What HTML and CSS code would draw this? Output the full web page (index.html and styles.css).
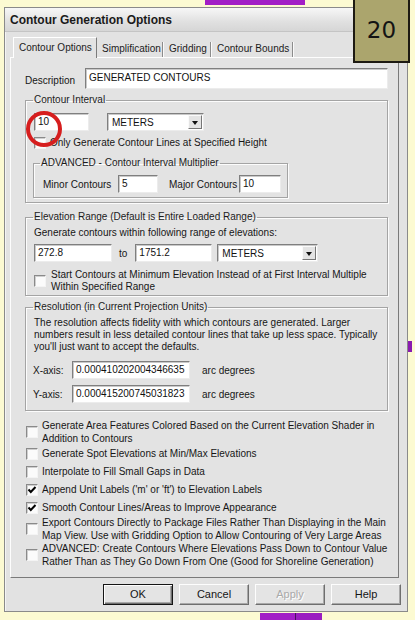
FILE: index.html
```html
<!DOCTYPE html>
<html>
<head>
<meta charset="utf-8">
<title>Contour Generation Options</title>
<link rel="stylesheet" href="styles.css">
</head>
<body>
<div class="deco deco-top"></div>
<div class="deco deco-bottom"></div>
<div class="deco deco-right"></div>

<div class="window">
  <div class="titlebar">Contour Generation Options</div>

  <div class="tabs">
    <div class="tab active w-opt">Contour Options</div>
    <div class="tab w-simp">Simplification</div>
    <div class="tab w-grid">Gridding</div>
    <div class="tab w-bounds">Contour Bounds</div>
  </div>

  <div class="panel">
    <div class="row desc-row">
      <span class="lbl-desc">Description</span>
      <div class="input grow">GENERATED CONTOURS</div>
    </div>

    <fieldset class="group g-interval">
      <legend>Contour Interval</legend>
      <div class="row h18">
        <div class="input in-interval">10</div>
        <div class="combo c-interval"><span class="combo-text">METERS</span><span class="drop"><i></i></span></div>
      </div>
      <div class="check c-only">
        <span class="box"></span>
        <span class="check-text">Only Generate Contour Lines at Specified Height</span>
      </div>
      <fieldset class="group g-adv">
        <legend>ADVANCED - Contour Interval Multiplier</legend>
        <div class="row h18">
          <span class="lbl-minor">Minor Contours</span>
          <div class="input in-minor">5</div>
          <span class="lbl-major">Major Contours</span>
          <div class="input in-major">10</div>
        </div>
      </fieldset>
    </fieldset>

    <fieldset class="group g-elev">
      <legend>Elevation Range (Default is Entire Loaded Range)</legend>
      <div class="line">Generate contours within following range of elevations:</div>
      <div class="row h18 r-range">
        <div class="input in-min">272.8</div>
        <span class="lbl-to">to</span>
        <div class="input in-max">1751.2</div>
        <div class="combo c-elev"><span class="combo-text">METERS</span><span class="drop"><i></i></span></div>
      </div>
      <div class="check c-start">
        <span class="box"></span>
        <span class="check-text lh12">Start Contours at Minimum Elevation Instead of at First Interval Multiple<br>Within Specified Range</span>
      </div>
    </fieldset>

    <fieldset class="group g-res">
      <legend>Resolution (in Current Projection Units)</legend>
      <div class="para">The resolution affects fidelity with which contours are generated. Larger<br>numbers result in less detailed contour lines that take up less space. Typically<br>you'll just want to accept the defaults.</div>
      <div class="row h18 r-x">
        <span class="lbl-axis">X-axis:</span>
        <div class="input in-axis">0.000410202004346635</div>
        <span class="lbl-unit">arc degrees</span>
      </div>
      <div class="row h18 r-y">
        <span class="lbl-axis">Y-axis:</span>
        <div class="input in-axis">0.000415200745031823</div>
        <span class="lbl-unit">arc degrees</span>
      </div>
    </fieldset>

    <div class="options">
      <div class="check opt multi">
        <span class="box"></span>
        <span class="check-text">Generate Area Features Colored Based on the Current Elevation Shader in<br>Addition to Contours</span>
      </div>
      <div class="check opt single">
        <span class="box"></span>
        <span class="check-text">Generate Spot Elevations at Min/Max Elevations</span>
      </div>
      <div class="check opt single">
        <span class="box"></span>
        <span class="check-text">Interpolate to Fill Small Gaps in Data</span>
      </div>
      <div class="check opt single">
        <span class="box checked"><svg viewBox="0 0 10 10" width="10" height="10"><polyline points="1.5,4.5 3.8,7 8.5,2" fill="none" stroke="#000" stroke-width="2"/></svg></span>
        <span class="check-text">Append Unit Labels ('m' or 'ft') to Elevation Labels</span>
      </div>
      <div class="check opt single">
        <span class="box checked"><svg viewBox="0 0 10 10" width="10" height="10"><polyline points="1.5,4.5 3.8,7 8.5,2" fill="none" stroke="#000" stroke-width="2"/></svg></span>
        <span class="check-text">Smooth Contour Lines/Areas to Improve Appearance</span>
      </div>
      <div class="check opt multi">
        <span class="box"></span>
        <span class="check-text">Export Contours Directly to Package Files Rather Than Displaying in the Main<br>Map View. Use with Gridding Option to Allow Contouring of Very Large Areas</span>
      </div>
      <div class="check opt multi">
        <span class="box"></span>
        <span class="check-text">ADVANCED: Create Contours Where Elevations Pass Down to Contour Value<br>Rather Than as They Go Down From One (Good for Shoreline Generation)</span>
      </div>
    </div>
  </div>

  <div class="buttons">
    <div class="btn default">OK</div>
    <div class="btn">Cancel</div>
    <div class="btn disabled">Apply</div>
    <div class="btn">Help</div>
  </div>
</div>

<svg class="mark" width="40" height="40" viewBox="0 0 40 40"><circle cx="20" cy="20" r="16" fill="none" stroke="#d61e1e" stroke-width="4"/></svg>
<div class="badge">20</div>
</body>
</html>
```

FILE: styles.css
```css
* { box-sizing: border-box; }

body {
  margin: 0;
  width: 415px;
  height: 620px;
  overflow: hidden;
  position: relative;
  background: #fcfad2;
  font-family: "Liberation Sans", Arial, sans-serif;
  font-size: 10px;
  color: #161616;
}

/* background decorations from the surrounding canvas */
.deco { position: absolute; background: #a21fc6; }
.deco-top { left: 205px; top: 0; width: 100px; height: 5px; }
.deco-bottom { left: 260px; top: 613px; width: 62px; height: 7px;
  background: linear-gradient(90deg, #a21fc6 0 35px, #4a1060 35px 36px, #9a1dc0 36px); }
.deco-right { left: 408px; top: 341px; width: 4px; height: 11px; background: #8a1ab0; }

.window {
  margin: 7px 0 0 4px;
  width: 404px;
  height: 605px;
  border: 1px solid #8a8a8a;
  box-shadow: inset 1px 1px 0 #f4f4f4;
  background: #e2e2e2;
  display: flex;
  flex-direction: column;
}

.titlebar {
  height: 24px;
  line-height: 24px;
  padding-left: 5px;
  font-size: 12px;
  font-weight: bold;
  color: #1a1a1a;
  background: linear-gradient(#f7f7f7, #e0e0e0 60%, #d6d6d6);
  border-bottom: 1px solid #c4c4c4;
  flex: none;
}

.tabs {
  display: flex;
  align-items: flex-end;
  margin: 5px 0 0 8px;
  height: 20px;
  flex: none;
}
.tab {
  height: 15px;
  line-height: 14px;
  padding-left: 5px;
  white-space: nowrap;
  border-right: 1px solid #8c8c8c;
  box-shadow: 1px 0 0 #fafafa;
  color: #1c1c1c;
}
.tab.active {
  height: 21px;
  line-height: 20px;
  padding-left: 5px;
  background: #e3e3e3;
  border-top: 1px solid #fff;
  border-left: 1px solid #fff;
  border-right: 1px solid #7c7c7c;
  box-shadow: none;
  margin-bottom: -1px;
  position: relative;
  z-index: 1;
}
.w-opt { width: 84px; }
.w-simp { width: 66px; }
.w-grid { width: 48px; padding-left: 6px; }
.w-bounds { width: 82px; padding-left: 6px; }

.panel {
  margin-left: 5px;
  width: 389px;
  height: 521px;
  flex: none;
  background: #e3e3e3;
  border: 1px solid;
  border-color: #fdfdfd #7a7a7a #7a7a7a #fdfdfd;
  padding: 10px 10px 8px 14px;
}

.row { display: flex; align-items: center; }
.h18 { height: 18px; }

.desc-row { height: 21px; }
.lbl-desc { width: 60px; padding-top: 3px; }
.grow { flex: 1; }

.input {
  height: 100%;
  background: #fff;
  border: 1px solid;
  border-color: #7f7f7f #ececec #ececec #7f7f7f;
  box-shadow: inset 1px 1px 0 #c9c9c9;
  padding: 2px 0 0 3px;
  line-height: 12px;
  white-space: nowrap;
  overflow: hidden;
  color: #111;
}
.desc-row .input { padding-top: 3px; }

.combo {
  height: 100%;
  display: flex;
  align-items: center;
  background: #fff;
  border: 1px solid;
  border-color: #7f7f7f #ececec #ececec #7f7f7f;
  box-shadow: inset 1px 1px 0 #c9c9c9;
  padding: 1px 1px 1px 4px;
}
.combo-text { flex: 1; color: #111; }
.drop {
  width: 14px;
  height: 14px;
  display: flex;
  align-items: center;
  justify-content: center;
  background: #e4e4e4;
  border: 1px solid;
  border-color: #fafafa #777 #777 #fafafa;
}
.drop i {
  width: 0;
  height: 0;
  border-left: 3.5px solid transparent;
  border-right: 3.5px solid transparent;
  border-top: 4px solid #111;
  margin-top: 1px;
}

.group {
  margin: 0;
  min-width: 0;
  border: 1px solid #a4a4a4;
  box-shadow: inset 1px 1px 0 #fcfcfc, 1px 1px 0 #fcfcfc;
  padding: 7px 4px 4px 7px;
}
.group legend {
  padding: 0 1px;
  line-height: 12px;
  color: #1c1c1c;
}

.g-interval { margin-top: 5px; }
.in-interval { width: 55px; margin-left: 1px; }
.c-interval { width: 97px; margin-left: 18px; }

.check { display: flex; align-items: center; }
.box {
  width: 12px;
  height: 12px;
  flex: none;
  background: #fbfbfb;
  border: 1px solid;
  border-color: #8a8a8a #f4f4f4 #f4f4f4 #8a8a8a;
  box-shadow: inset 1px 1px 0 #cfcfcf;
  display: flex;
  align-items: center;
  justify-content: center;
}
.check-text { white-space: nowrap; }

.c-only { margin: 6px 0 0 1px; height: 12px; line-height: 12px; }
.c-only .check-text { margin-left: 4px; }

.g-adv { margin-top: 8px; width: 255px; padding: 6px 4px 4px 6px; }
.lbl-minor { width: 75px; margin-left: 3px; }
.in-minor { width: 40px; }
.lbl-major { width: 70px; margin-left: 11px; }
.in-major { width: 42px; }

.g-elev { margin-top: 8px; padding: 4px 4px 2px 7px; }
.line { line-height: 12px; margin-left: 1px; }
.r-range { margin-top: 5px; }
.in-min { width: 78px; margin-left: 1px; }
.lbl-to { margin: 0 8px 0 7px; }
.in-max { width: 77px; }
.c-elev { width: 101px; margin-left: 5px; }
.c-start { margin: 7px 0 0 1px; }
.c-start .check-text { margin-left: 5px; }
.lh12 { line-height: 12px; }

.g-res { margin-top: 5px; padding: 4px 4px 7px 7px; }
.para { line-height: 12px; margin-left: 1px; white-space: nowrap; }
.r-x { margin-top: 8px; }
.r-y { margin-top: 6px; }
.lbl-axis { width: 39px; }
.in-axis { width: 118px; }
.lbl-unit { margin-left: 12px; }

.options { margin-top: 8px; display: flex; flex-direction: column; }
.opt { margin-left: 1px; }
.opt .check-text { margin-left: 4px; }
.opt.single { height: 18px; line-height: 18px; }
.opt.single:nth-child(5) { height: 17px; }
.opt.multi { line-height: 13px; }

.buttons {
  display: flex;
  justify-content: flex-end;
  gap: 6px;
  margin-top: 6px;
  padding-right: 6px;
  flex: none;
}
.btn {
  width: 70px;
  height: 21px;
  line-height: 19px;
  text-align: center;
  background: #e4e4e4;
  border: 1px solid;
  border-color: #fdfdfd #6e6e6e #6e6e6e #fdfdfd;
  box-shadow: inset -1px -1px 0 #a8a8a8;
  color: #151515;
  font-size: 11px;
}
.btn.default {
  border: 1px solid #151515;
  box-shadow: inset 1px 1px 0 #fdfdfd, inset -1px -1px 0 #6e6e6e, inset -2px -2px 0 #a8a8a8;
}
.btn.disabled { color: #a9a9a9; text-shadow: 1px 1px 0 #fff; }

.mark { position: absolute; left: 24px; top: 109px; }

.badge {
  position: absolute;
  left: 353px;
  top: -2px;
  width: 57px;
  height: 65px;
  background: #aba56d;
  border: 2px solid #1d1a12;
  font-family: "DejaVu Sans", sans-serif;
  font-size: 23px;
  line-height: 61px;
  text-align: center;
  color: #141414;
}
```
